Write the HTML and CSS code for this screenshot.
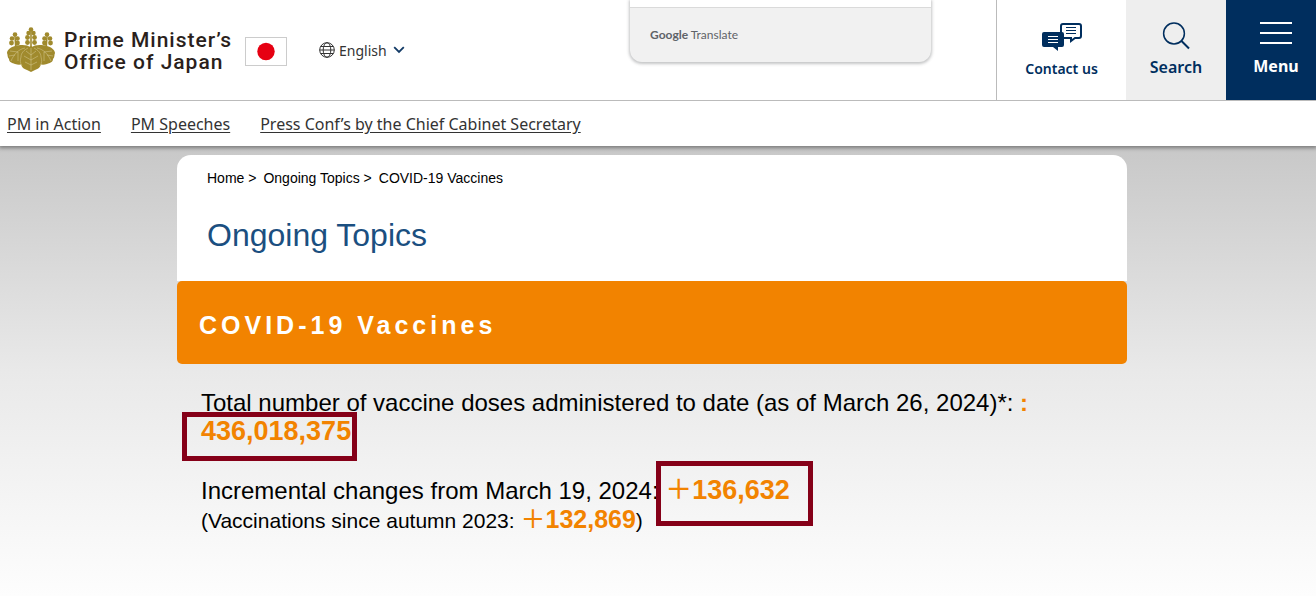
FILE: index.html
```html
<!DOCTYPE html>
<html lang="en">
<head>
<meta charset="utf-8">
<meta name="viewport" content="width=device-width, initial-scale=1">
<title>COVID-19 Vaccines | Prime Minister's Office of Japan</title>
<link rel="stylesheet" href="styles.css">
</head>
<body>
<header class="site-header">
  <div class="masthead">
    <a class="brand" href="#">
      <svg class="crest" viewBox="0 0 48 46" aria-hidden="true">
        <g fill="#a08a2d">
          <circle cx="24" cy="2.500" r="2.300"/><circle cx="21.500" cy="6" r="2.200"/><circle cx="26.500" cy="6" r="2.200"/>
          <circle cx="20.500" cy="10.500" r="2.400"/><circle cx="27.500" cy="10.500" r="2.400"/>
          <circle cx="20.500" cy="15.500" r="2.400"/><circle cx="27.500" cy="15.500" r="2.400"/>
          <circle cx="8" cy="7.500" r="2.300"/><circle cx="5" cy="11.500" r="2.300"/><circle cx="10.500" cy="11.500" r="2.300"/>
          <circle cx="4.500" cy="16" r="2.400"/><circle cx="10.500" cy="16" r="2.400"/>
          <circle cx="40" cy="7.500" r="2.300"/><circle cx="37.500" cy="11.500" r="2.300"/><circle cx="43" cy="11.500" r="2.300"/>
          <circle cx="37.500" cy="16" r="2.400"/><circle cx="43.500" cy="16" r="2.400"/>
          <path d="M23.200 4h1.600v18h-1.600zM7.200 9h1.400l1.400 12H8zM39.400 9h1.400L40 21h-2z"/>
          <path d="M24 21C20 17 13 18 8 19c-4 1-8 4-8 7 1 2 0 4 2 6 0 3 3 4 6 5 3 1 5 1 8 0l8-4 8 4c3 1 5 1 8 0 3-1 6-2 6-5 2-2 1-4 2-6 0-3-4-6-8-7-5-1-12-2-16 2z"/>
          <path d="M24 19c-4 2-8 4-9 8-1 3-2 6-1 9 0 4 3 6 6 7l4 2 4-2c3-1 6-3 6-7 1-3 0-6-1-9-1-4-5-6-9-8z"/>
        </g>
        <g fill="none" stroke="#d8cc98" stroke-width=".5">
          <path d="M21 21c-4 2-7 5-7 9-1 3-1 6 1 9M27 21c4 2 7 5 7 9 1 3 1 6-1 9M24 21v22M24 28l-5-4M24 28l5-4M24 33l-7-4M24 33l7-4M24 38l-6-3M24 38l6-3M18 21C12 22 7 27 4 34M30 21c6 1 11 6 14 13M11 25l-8-1M8 28l-6 1M11 25v9M37 25l8-1M40 28l6 1M37 25v9"/>
        </g>
      </svg>
      <span class="brand-name">Prime Minister’s<br>Office of Japan</span>
      <svg class="flag" viewBox="0 0 42 29" role="img" aria-label="Flag of Japan">
        <rect x=".5" y=".5" width="41" height="28" fill="#fff" stroke="#ccc"/>
        <circle cx="21" cy="14.500" r="8.700" fill="#e60012"/>
      </svg>
    </a>
    <button class="language" type="button">
      <svg class="globe" viewBox="0 0 16 16" fill="none" stroke="#333" aria-hidden="true">
        <circle cx="8" cy="8" r="7.300"/><ellipse cx="8" cy="8" rx="3.800" ry="7.300"/><path d="M1.700 4.500h12.600M.7 8h14.600M1.700 11.500h12.600"/>
      </svg>
      English
      <svg class="chevron" viewBox="0 0 12 8" fill="none" stroke="#123a66" stroke-width="1.800" aria-hidden="true"><path d="M1.200 1.200 6 6l4.800-4.800"/></svg>
    </button>
    <nav class="tools" aria-label="Tools">
      <a class="tool contact" href="#">
        <svg class="contact-icon" viewBox="0 0 40 28" aria-hidden="true">
          <path d="M21 2h16a2 2 0 0 1 2 2v10a2 2 0 0 1-2 2h-4l-4 3v-3H19V4a2 2 0 0 1 2-2z" fill="#fff" stroke="#002e5e" stroke-width="2"/>
          <path d="M24 5.500h10M24 8.500h10M24 11.500h10" stroke="#002e5e"/>
          <path d="M2 10h18a2 2 0 0 1 2 2v11a2 2 0 0 1-2 2h-4v4l-5-4H2a2 2 0 0 1-2-2V12a2 2 0 0 1 2-2z" fill="#002e5e"/>
          <path d="M6 14.500h10M6 17.500h10M6 20.500h10" stroke="#fff"/>
        </svg>
        Contact us
      </a>
      <button class="tool search" type="button">
        <svg class="search-icon" viewBox="0 0 28 28" fill="none" stroke="#002e5e" aria-hidden="true"><circle cx="12" cy="11.500" r="10.400" stroke-width="1.500"/><path d="m19 18.500 8 8" stroke-width="2"/></svg>
        Search
      </button>
      <button class="tool menu" type="button">
        <svg class="menu-icon" viewBox="0 0 32 22" stroke="#fff" stroke-width="2" aria-hidden="true"><path d="M0 1h32M0 11h32M0 21h32"/></svg>
        Menu
      </button>
    </nav>
    <aside class="translate" aria-label="Google Translate">
      <span><b>Google</b> Translate</span>
    </aside>
  </div>
  <nav class="topics" aria-label="Main">
    <a href="#">PM in Action</a>
    <a href="#">PM Speeches</a>
    <a href="#">Press Conf’s by the Chief Cabinet Secretary</a>
  </nav>
</header>
<main class="page">
  <div class="column">
    <section class="intro">
      <nav class="crumbs" aria-label="Breadcrumb">
        <span><a href="#">Home</a> &gt;</span>
        <span><a href="#">Ongoing Topics</a> &gt;</span>
        <span>COVID-19 Vaccines</span>
      </nav>
      <h1>Ongoing Topics</h1>
    </section>
    <h2>COVID-19 Vaccines</h2>
    <section class="figures">
      <p class="total">Total number of vaccine doses administered to date (as of March 26, 2024)*: <strong class="colon">:</strong><br><strong class="count marked marked-total">436,018,375</strong></p>
      <p class="change">Incremental changes from March 19, 2024: <strong class="count marked marked-change"><span class="plus">&#xFF0B;</span>136,632</strong></p>
      <p class="autumn">(Vaccinations since autumn 2023: <strong class="subcount"><span class="plus">&#xFF0B;</span>132,869</strong>)</p>
    </section>
  </div>
</main>
</body>
</html>
```
FILE: styles.css
```css
* {
  box-sizing: border-box;
}

body {
  margin: 0;
  min-height: 100vh;
  display: flex;
  flex-direction: column;
  font-family: "Liberation Sans", Arial, sans-serif;
  color: #000;
}

a {
  color: inherit;
  text-decoration: none;
}

button {
  border: 0;
  margin: 0;
  padding: 0;
  background: none;
  font: inherit;
  color: inherit;
}

.site-header {
  position: relative;
  font-family: "Noto Sans", sans-serif;
  background: #fff;
  box-shadow: 0 1px 4px 1px rgba(0, 0, 0, 0.4);
}

.masthead {
  position: relative;
  display: flex;
  align-items: stretch;
  height: 101px;
  border-bottom: 1px solid #bbb;
}

.brand {
  display: flex;
  align-items: center;
  padding-left: 7px;
}

.crest {
  width: 48px;
  height: 46px;
  margin-right: 9px;
}

.brand-name {
  width: 181px;
  padding-top: 2px;
  font-family: Roboto, sans-serif;
  font-size: 21px;
  font-weight: 500;
  line-height: 22px;
  letter-spacing: 1px;
  white-space: nowrap;
  color: #2b1f1c;
}

.flag {
  width: 42px;
  height: 29px;
  margin-top: 3px;
}

.language {
  display: flex;
  align-items: center;
  gap: 4px;
  margin-left: 32px;
  font-size: 14px;
  color: #333;
}

.globe {
  width: 16px;
  height: 16px;
}

.chevron {
  width: 12px;
  height: 8px;
  margin-left: 2px;
}

.tools {
  display: flex;
  margin-left: auto;
  border-left: 1px solid #bbb;
  font-weight: 600;
  color: #002e5e;
}

.tool {
  display: flex;
  flex-direction: column;
  align-items: center;
  padding-top: 22px;
  line-height: 20px;
}

.contact {
  width: 129px;
  gap: 9px;
  font-size: 14px;
}

.contact-icon {
  width: 40px;
  height: 28px;
  overflow: visible;
}

.search {
  width: 100px;
  gap: 7px;
  font-size: 16px;
  background: #eee;
}

.search-icon {
  width: 28px;
  height: 28px;
}

.menu {
  width: 90px;
  gap: 12px;
  padding-left: 10px;
  font-size: 16px;
  font-weight: 700;
  color: #fff;
  background: #002e5e;
}

.menu-icon {
  width: 32px;
  height: 22px;
}

.translate {
  position: absolute;
  top: 0;
  left: 630px;
  width: 301px;
  height: 62px;
  border-top: 7px solid #fff;
  border-radius: 0 0 12px 12px;
  background: #f1f1f1;
  box-shadow: inset 0 1px #dadada, 0 1px 3px 1px rgba(60, 64, 67, 0.3);
  padding: 20px;
  font-family: Lato, sans-serif;
  font-size: 12px;
  line-height: 16px;
  color: #5f6368;
}

.topics {
  display: flex;
  gap: 30px;
  padding: 12px 7px 11px;
  font-size: 16px;
  line-height: 22px;
  color: #333;
}

.topics a {
  text-decoration: underline;
  text-underline-offset: 2px;
}

.page {
  flex: 1;
  padding: 9px 12px 0 0;
  background: linear-gradient(#c8c8c8, #e9e9e9 50%, #fdfdfd);
}

.column {
  max-width: 950px;
  margin: 0 auto;
}

.intro {
  padding: 14px 30px 26px;
  border-radius: 14px 14px 0 0;
  background: #fff;
}

.crumbs {
  display: flex;
  gap: 7px;
  font-size: 14px;
  line-height: 18px;
}

h1 {
  margin: 28px 0 0;
  font-size: 32px;
  font-weight: 400;
  line-height: 40px;
  color: #1b4f80;
}

h2 {
  margin: 0;
  padding: 28px 22px 23px;
  border-radius: 5px;
  font-size: 25px;
  line-height: 32px;
  letter-spacing: 4px;
  color: #fff;
  background: #f28300;
}

.figures {
  padding: 24px;
}

.figures p {
  margin: 0;
}

.total,
.change {
  font-size: 24px;
  line-height: 29px;
}

.figures .change {
  margin-top: 30px;
}

.autumn {
  font-size: 21px;
  line-height: 29px;
}

.colon,
.count,
.subcount {
  color: #f28300;
}

.count {
  font-size: 27px;
}

.subcount {
  font-size: 25px;
}

.plus {
  font-family: "Noto Sans CJK JP", sans-serif;
  font-weight: 500;
  line-height: 0;
}

.marked {
  position: relative;
}

.marked::after {
  content: "";
  position: absolute;
  box-sizing: border-box;
  border: 5px solid #850018;
}

.marked-total::after {
  top: -4px;
  left: -19px;
  width: 175px;
  height: 49px;
}

.marked-change::after {
  top: -14px;
  left: -9px;
  width: 157px;
  height: 65px;
}
```
